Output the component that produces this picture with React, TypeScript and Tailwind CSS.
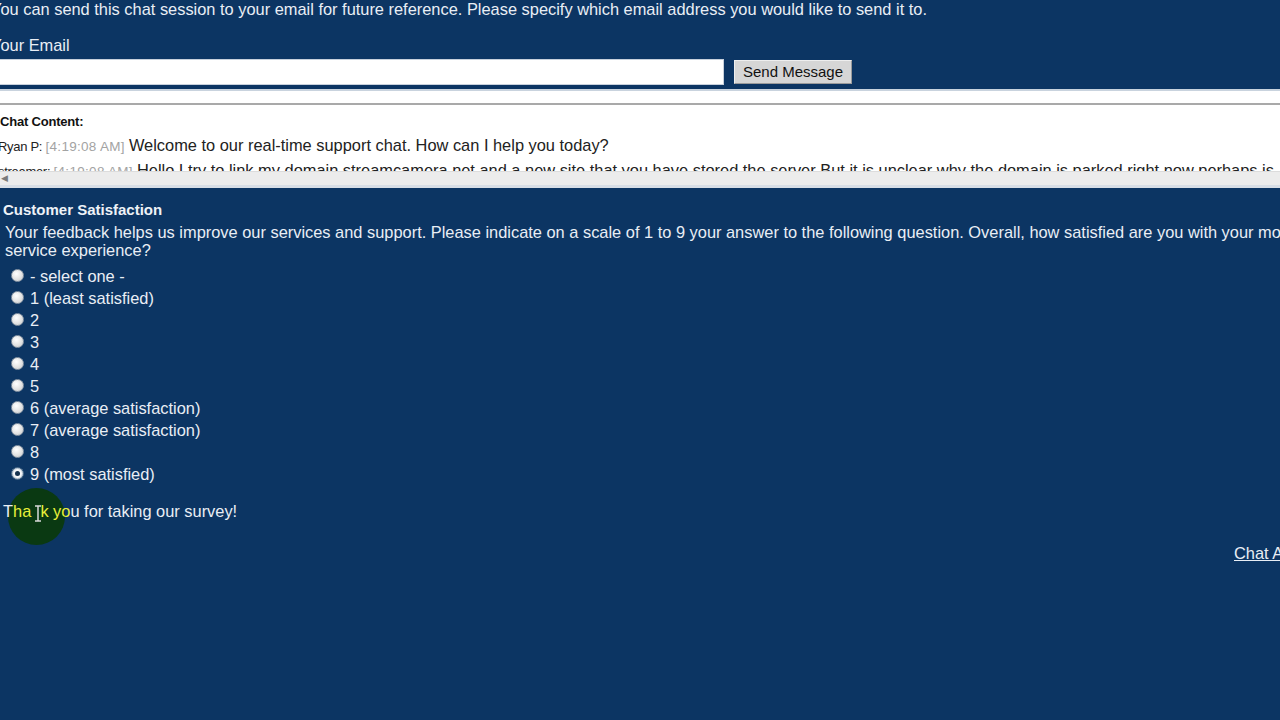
import React from "react";

const Radio = ({ checked }: { checked?: boolean }) =>
  checked ? (
    <span className="inline-flex items-center justify-center w-[13px] h-[13px] rounded-full bg-[#f4f6f8] border border-[#3c5f80] shadow-[inset_0_0_0_1px_#b8c6d4] shrink-0">
      <span className="w-[5px] h-[5px] rounded-full bg-[#15324f]" />
    </span>
  ) : (
    <span className="inline-block w-[13px] h-[13px] rounded-full border border-[#8e9aa8] bg-[radial-gradient(circle_at_40%_35%,#ffffff_0%,#e3e3e3_55%,#bfc3c8_100%)] shrink-0" />
  );

export default function App() {
  const options = [
    "- select one -",
    "1 (least satisfied)",
    "2",
    "3",
    "4",
    "5",
    "6 (average satisfaction)",
    "7 (average satisfaction)",
    "8",
    "9 (most satisfied)",
  ];
  return (
    <div
      className="w-[1280px] h-[720px] overflow-hidden bg-[#0c3563] text-[#e9eef5] relative"
      style={{ fontFamily: '"Liberation Sans", Arial, sans-serif' }}
    >
      <div className="w-[1400px] flex flex-col">
        {/* email section */}
        <div className="ml-[-9px] text-[16.4px] leading-[18px] whitespace-nowrap">
          You can send this chat session to your email for future reference. Please specify which email address you would like to send it to.
        </div>
        <div className="ml-[-9px] mt-[18px] text-[16.4px] leading-[18px] whitespace-nowrap">Your Email</div>
        <div className="flex items-center mt-[4px] h-[28px]">
          <div className="w-[724px] h-[26px] bg-white border border-[#c7d0dc] border-l-0" />
          <div className="ml-[10px] w-[118px] h-[24px] bg-[#d6d6d6] border border-[#eeeeee] border-r-[#9a9a9a] border-b-[#9a9a9a] text-[#111] text-[15px] flex items-center justify-center">
            Send Message
          </div>
        </div>
        {/* chat box */}
        <div className="mt-[3px] h-[2px] bg-[#c9d3de]" />
        <div className="bg-white h-[12px]" />
        <div className="w-[1280px] border-t-2 border-[#a9a9a9] bg-white h-[82px] flex flex-col">
          <div className="h-[66px] overflow-hidden">
            <div className="text-[13px] font-bold text-[#111] mt-[9px] leading-[16px] tracking-[-0.2px]">Chat Content:</div>
            <div className="whitespace-nowrap mt-[5px] ml-[-2px] leading-[20px] text-[#222]">
              <span className="text-[13px] tracking-[-0.3px]">Ryan P: </span>
              <span className="text-[13.5px] text-[#a3a3a3] tracking-[0.3px]">[4:19:08 AM] </span>
              <span className="text-[16.4px]">Welcome to our real-time support chat. How can I help you today?</span>
            </div>
            <div className="whitespace-nowrap mt-[3px] ml-[-2px] leading-[20px] text-[#222]">
              <span className="text-[13px] tracking-[-0.3px]">streamer: </span>
              <span className="text-[13.5px] text-[#a3a3a3] tracking-[0.3px]">[4:19:08 AM] </span>
              <span className="text-[16.4px]">Hello I try to link my domain streamcamera.net and a new site that you have stored the server But it is unclear why the domain is parked right now perhaps is</span>
            </div>
          </div>
          <div className="h-[14px] bg-[#ececec] border-t border-[#dcdcdc] flex items-center">
            <span className="text-[9px] text-[#7a7a7a] ml-[1px] leading-none">◀</span>
          </div>
        </div>
        <div className="w-[1280px] h-[3px] bg-[#d8dee6]" />

        {/* survey */}
        <div className="ml-[3px] mt-[13px] text-[15px] font-bold leading-[18px] text-[#eef2f7]">Customer Satisfaction</div>
        <div className="ml-[5px] mt-[4px] text-[16.4px] leading-[18px] whitespace-nowrap">
          Your feedback helps us improve our services and support. Please indicate on a scale of 1 to 9 your answer to the following question. Overall, how satisfied are you with your most recent
          <br />
          service experience?
        </div>
        <div className="flex flex-col mt-[6px] ml-[11px]">
          {options.map((o, i) => (
            <div key={i} className="flex items-center h-[22px] gap-[6px] text-[16.4px]">
              <span className="-mt-[2px] flex">
                <Radio checked={i === 9} />
              </span>
              <span className="whitespace-nowrap">{o}</span>
            </div>
          ))}
        </div>
        <div className="relative ml-[3px] mt-[17px] text-[16.4px] leading-[18px] whitespace-nowrap">
          <span className="absolute left-[5px] top-[-14px] w-[57px] h-[57px] rounded-full bg-[#0a3912]" />
          <span className="relative">
            <span>T</span>
            <span className="text-[#e8f03a]">ha</span>
            <span className="text-[#0a3912]">n</span>
            <span className="text-[#e8f03a]">k yo</span>
            <span>u for taking our survey!</span>
          </span>
          <svg className="absolute left-[30px] top-[3px]" width="10" height="18" viewBox="0 0 10 18">
            <path d="M2 1h6M5 1v15M2 16h6" stroke="#d9d9d9" strokeWidth="1.5" fill="none" />
          </svg>
        </div>
        <div className="ml-[1234px] mt-[24px] text-[16.4px] leading-[18px] underline whitespace-nowrap">Chat Archive</div>
      </div>
    </div>
  );
}
